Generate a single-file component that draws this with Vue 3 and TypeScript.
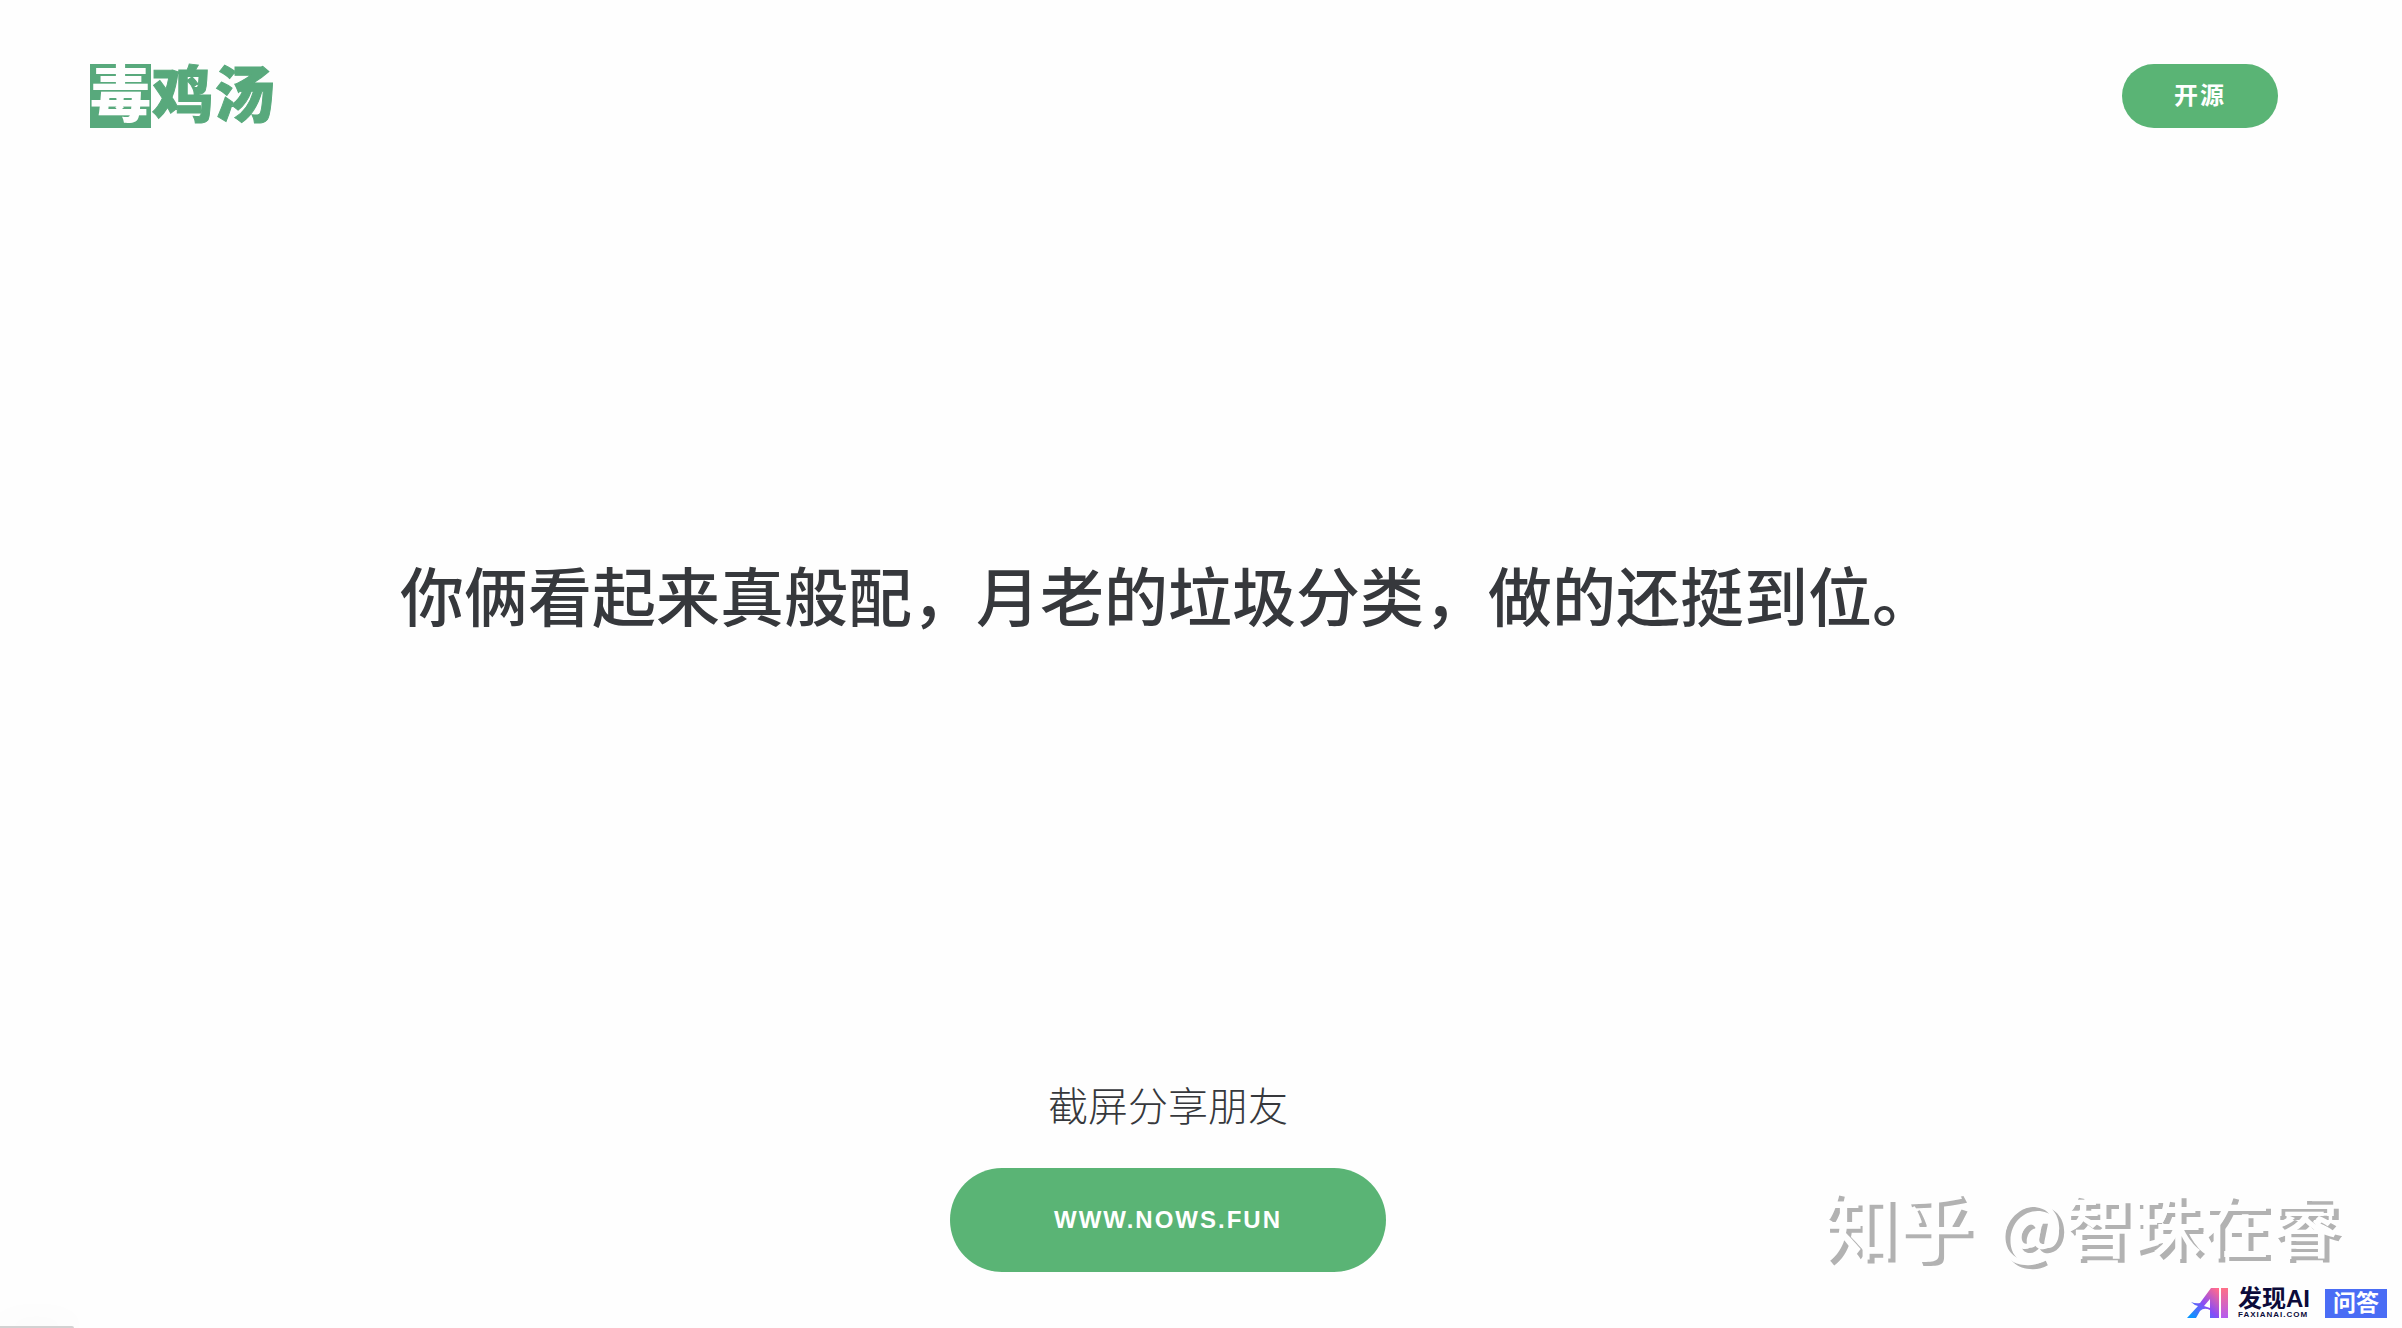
<script setup lang="ts">
import { ref } from 'vue'

const quote = ref('你俩看起来真般配，月老的垃圾分类，做的还挺到位。')
</script>

<template>
  <div class="page">
    <header class="top">
      <a class="logo" href="#" aria-label="毒鸡汤"><span class="logo-box">毒</span><span>鸡</span><span>汤</span></a>
      <a class="pill pill-small" href="#">开源</a>
    </header>

    <main class="hero">
      <p class="quote">{{ quote }}</p>
    </main>

    <section class="share">
      <p class="share-text">截屏分享朋友</p>
      <button class="pill pill-large" type="button">WWW.NOWS.FUN</button>
    </section>

    <div class="marks">
      <div class="author"><span class="site">知乎</span><span>@智珠在睿</span></div>
      <div class="brand">
        <svg class="brand-icon" viewBox="0 0 41 30" aria-hidden="true">
          <defs>
            <linearGradient id="a-fill" x1="0" y1="1" x2="1" y2="0">
              <stop offset="0.1" stop-color="#0a94ff" />
              <stop offset="0.5" stop-color="#8a4cf5" />
              <stop offset="0.95" stop-color="#ff6a8e" />
            </linearGradient>
            <linearGradient id="i-fill" x1="0" y1="0" x2="0" y2="1">
              <stop offset="0" stop-color="#ff6f86" />
              <stop offset="1" stop-color="#b45cf0" />
            </linearGradient>
          </defs>
          <path fill="url(#a-fill)" fill-rule="evenodd" d="M0 30 L11 18 Q7 17 4 14 Q9 16 13 15 L24 0 H32 V30 H23 V22 Q17 19 13 23 L9 30 Z M17 18 L23 20 V11 Z" />
          <path fill="url(#i-fill)" d="M34 0 H41 V30 H34 Z" />
        </svg>
        <div class="brand-name">
          <span class="brand-title">发现AI</span>
          <span class="brand-domain">FAXIANAI.COM</span>
        </div>
        <span class="brand-tag">问答</span>
      </div>
    </div>
    <div class="status" aria-hidden="true"></div>
  </div>
</template>

<style>
body {
  margin: 0;
  background: #fefefe;
}
</style>

<style scoped>
.page {
  position: relative;
  box-sizing: border-box;
  display: flex;
  flex-direction: column;
  min-height: 100vh;
  padding: 64px 66px 56px 0;
  overflow: hidden;
  color: #36383c;
  font-family: "Liberation Sans", "Noto Sans CJK SC", sans-serif;
}

.top {
  display: flex;
  align-items: center;
  justify-content: space-between;
  padding: 0 58px 0 90px;
}

.logo {
  display: flex;
  gap: 1px;
  color: #58a97c;
  font-size: 61px;
  font-weight: 900;
  line-height: 64px;
  text-decoration: none;
  -webkit-text-stroke: 1px currentColor;
}

.logo-box {
  background: #58a97c;
  color: #fefefe;
  -webkit-text-stroke: 0;
}

.pill {
  display: flex;
  box-sizing: border-box;
  align-items: center;
  justify-content: center;
  border: 0;
  border-radius: 52px;
  background: #5ab475;
  color: #fff;
  font-family: inherit;
  font-size: 24px;
  font-weight: 700;
  letter-spacing: 2px;
  line-height: 36px;
  text-decoration: none;
}

.pill-small {
  min-width: 156px;
  min-height: 64px;
}

.pill-large {
  min-width: 436px;
  min-height: 104px;
}

.hero {
  display: flex;
  flex: 1;
  align-items: center;
  justify-content: center;
  padding-bottom: 4px;
}

.quote {
  margin: 0;
  font-size: 64px;
  font-weight: 500;
  line-height: 96px;
}

.share {
  display: flex;
  flex-direction: column;
  align-items: center;
  gap: 34px;
}

.share-text {
  margin: 0;
  font-family: "Noto Sans CJK SC", sans-serif;
  font-size: 40px;
  font-weight: 300;
  line-height: 60px;
}

.marks {
  position: absolute;
  right: 15px;
  bottom: 10px;
  display: flex;
  flex-direction: column;
  align-items: flex-end;
  gap: 14px;
}

.author {
  display: flex;
  gap: 24px;
  align-items: center;
  margin-right: 48px;
  color: #fefefe;
  font-family: "Noto Sans CJK SC", sans-serif;
  font-size: 69px;
  font-weight: 500;
  line-height: 100px;
  text-shadow: 5px 4px 0 #b2b2b2;
}

.site {
  font-size: 75px;
}

.brand {
  display: flex;
  align-items: flex-end;
}

.brand-icon {
  width: 41px;
  height: 30px;
  margin-right: 10px;
}

.brand-name {
  display: flex;
  flex-direction: column;
  gap: 1px;
  margin-right: 15px;
  color: #0c0b3a;
}

.brand-title {
  font-size: 24px;
  font-weight: 700;
  line-height: 24px;
}

.brand-domain {
  font-size: 8px;
  font-weight: 700;
  letter-spacing: 1px;
  line-height: 6px;
}

.brand-tag {
  width: 62px;
  background: #4a6df5;
  color: #fff;
  font-size: 23px;
  font-weight: 700;
  line-height: 29px;
  text-align: center;
}

.status {
  position: absolute;
  bottom: 0;
  left: 0;
  width: 74px;
  height: 2px;
  border-top-right-radius: 4px;
  background: #d2d2d2;
  box-shadow: 0 0 32px rgba(0, 0, 0, 0.18);
}
</style>
